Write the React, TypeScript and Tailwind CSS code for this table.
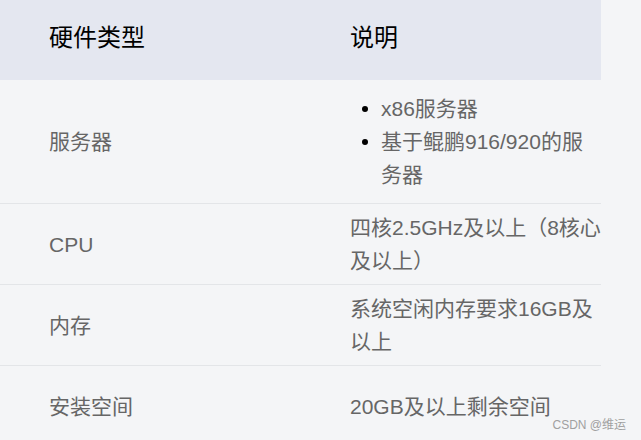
import React from "react";

const FONT = {
  fontFamily: '"Liberation Sans", "Noto Sans CJK SC", Arial, sans-serif',
};

type Row = {
  name: string;
  height: string;
  desc: React.ReactNode;
};

const Bullet: React.FC<{ lines: string[] }> = ({ lines }) => (
  <li className="flex items-start">
    <span className="w-[31px] h-[33px] flex items-center pl-[12px] shrink-0">
      <span className="block w-[6px] h-[6px] rounded-full bg-black" />
    </span>
    <span className="whitespace-nowrap">
      {lines.map((l, i) => (
        <React.Fragment key={i}>
          {i > 0 && <br />}
          {l}
        </React.Fragment>
      ))}
    </span>
  </li>
);

const Lines: React.FC<{ lines: string[] }> = ({ lines }) => (
  <div className="whitespace-nowrap">
    {lines.map((l, i) => (
      <React.Fragment key={i}>
        {i > 0 && <br />}
        {l}
      </React.Fragment>
    ))}
  </div>
);

const rows: Row[] = [
  {
    name: "服务器",
    height: "h-[124px]",
    desc: (
      <ul>
        <Bullet lines={["x86服务器"]} />
        <Bullet lines={["基于鲲鹏916/920的服", "务器"]} />
      </ul>
    ),
  },
  {
    name: "CPU",
    height: "h-[81px]",
    desc: <Lines lines={["四核2.5GHz及以上（8核心", "及以上）"]} />,
  },
  {
    name: "内存",
    height: "h-[81px]",
    desc: <Lines lines={["系统空闲内存要求16GB及", "以上"]} />,
  },
  {
    name: "安装空间",
    height: "h-[80px]",
    desc: <Lines lines={["20GB及以上剩余空间"]} />,
  },
];

export default function App() {
  return (
    <div
      className="relative w-[641px] h-[440px] overflow-hidden bg-[#f4f5f7]"
      style={FONT}
    >
      <div className="w-[601px]">
        {/* HEADER */}
        <div className="flex items-center h-[80px] pb-[4px] bg-[#e4e7f0] text-[24px] text-black">
          <div className="w-[350px] pl-[49px]">硬件类型</div>
          <div className="flex-1">说明</div>
        </div>

        {/* FILAS */}
        {rows.map((r, idx) => (
          <div
            key={idx}
            className={`flex items-center ${r.height} ${
              idx < rows.length - 1 ? "border-b border-[#e3e5e8]" : ""
            } text-[21px] leading-[33px] text-[#666666]`}
          >
            <div className="w-[350px] pl-[49px]">{r.name}</div>
            <div className="flex-1">{r.desc}</div>
          </div>
        ))}
      </div>

      {/* MARCA */}
      <div className="absolute right-[15px] bottom-[7px] text-[12px] leading-[16px] text-[#a0a0a0]">
        CSDN @维运
      </div>
    </div>
  );
}
